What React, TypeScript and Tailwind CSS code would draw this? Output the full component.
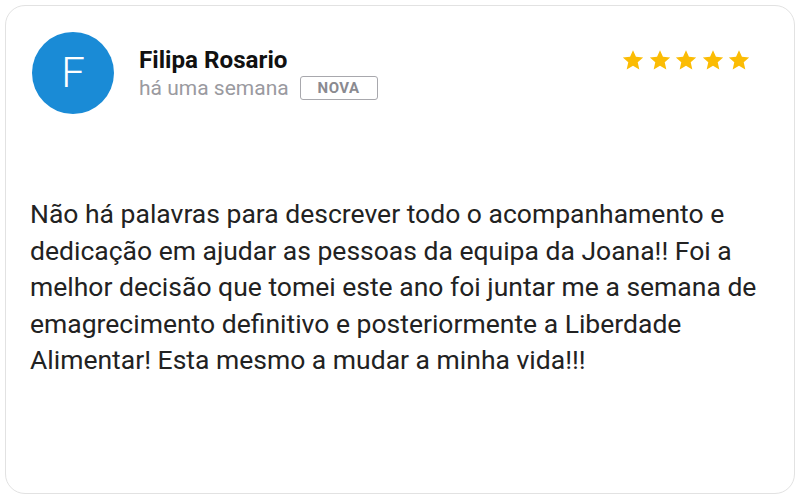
import React from "react";

const Star = () => (
  <svg width="24" height="24" viewBox="0 0 24 24">
    <path
      fill="#fbbc04"
      d="M12 2.2l2.95 6.6 7.2.7-5.43 4.8 1.6 7.1L12 17.7l-6.32 3.7 1.6-7.1L1.85 9.5l7.2-.7z"
    />
  </svg>
);

export default function App() {
  return (
    <div className="w-[800px] h-[500px] bg-white p-[5px]" style={{ fontFamily: "Roboto, 'Liberation Sans', sans-serif" }}>
      <div className="w-[790px] h-[489px] rounded-[20px] border border-[#e2e2e2] bg-white flex flex-col">
        <div className="flex items-start pl-[26px] pr-[43px] pt-[26px]">
          <div className="w-[82px] h-[82px] rounded-full bg-[#1a8bd6] flex items-center justify-center text-white text-[42px] font-light leading-none">
            F
          </div>
          <div className="ml-[25px] mt-[13px] flex flex-col">
            <div className="text-[24.2px] font-bold text-[#111] leading-[30px]">Filipa Rosario</div>
            <div className="flex items-center">
              <span className="text-[21px] text-[#9a9aa0] leading-[26px]">há uma semana</span>
              <span className="ml-[11px] w-[78px] h-[24px] border border-[#a8a8ad] rounded-[3px] flex items-center justify-center text-[15px] font-bold text-[#8a8a90] tracking-[0.5px]">
                NOVA
              </span>
            </div>
          </div>
          <div className="ml-auto mt-[16px] flex gap-[2.5px]">
            <Star />
            <Star />
            <Star />
            <Star />
            <Star />
          </div>
        </div>
        <div className="pl-[24px] pr-[10px] mt-[82px] text-[26.5px] leading-[36.6px] text-[#222]">
          Não há palavras para descrever todo o acompanhamento e dedicação em ajudar as pessoas da equipa da Joana!! Foi a melhor decisão que tomei este ano foi juntar me a semana de emagrecimento definitivo e posteriormente a Liberdade Alimentar! Esta mesmo a mudar a minha vida!!!
        </div>
      </div>
    </div>
  );
}
